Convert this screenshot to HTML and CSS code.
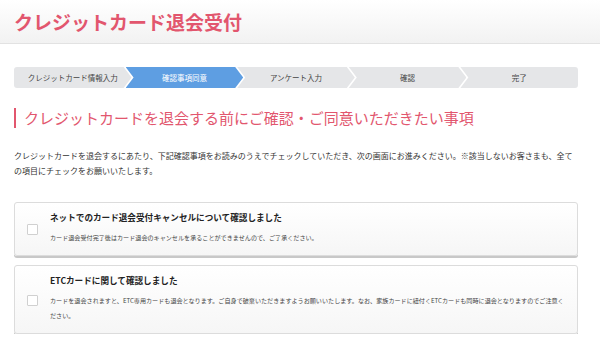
FILE: index.html
```html
<!DOCTYPE html>
<html lang="ja">
<head>
    <meta charset="UTF-8">
    <meta name="viewport" content="width=device-width, initial-scale=1.0">
    <title>クレジットカード退会受付</title>
    <link rel="stylesheet" href="styles.css">
</head>
<body>
    <header class="page-header">
        <h1>クレジットカード退会受付</h1>
    </header>

    <div class="content">
        <ol class="steps">
            <li class="step first">クレジットカード情報入力</li>
            <li class="step active">確認事項同意</li>
            <li class="step">アンケート入力</li>
            <li class="step">確認</li>
            <li class="step last">完了</li>
        </ol>

        <h2 class="section-title">クレジットカードを退会する前にご確認・ご同意いただきたい事項</h2>

        <p class="lead">クレジットカードを退会するにあたり、下記確認事項をお読みのうえでチェックしていただき、次の画面にお進みください。※該当しないお客さまも、全ての項目にチェックをお願いいたします。</p>

        <label class="check-card">
            <input type="checkbox" class="check-box">
            <span class="check-body">
                <span class="check-title">ネットでのカード退会受付キャンセルについて確認しました</span>
                <span class="check-text">カード退会受付完了後はカード退会のキャンセルを承ることができませんので、ご了承ください。</span>
            </span>
        </label>

        <label class="check-card">
            <input type="checkbox" class="check-box">
            <span class="check-body">
                <span class="check-title">ETCカードに関して確認しました</span>
                <span class="check-text">カードを退会されますと、ETC専用カードも退会となります。ご自身で破棄いただきますようお願いいたします。なお、家族カードに紐付くETCカードも同時に退会となりますのでご注意ください。</span>
            </span>
        </label>
    </div>
</body>
</html>
```

FILE: styles.css
```css
body {
    margin: 0;
    background-color: #fff;
    color: #333;
    font-family: "Noto Sans CJK JP", "Noto Sans", sans-serif;
}
.page-header {
    height: 43px;
    padding: 0 14px;
    display: flex;
    align-items: center;
    background: linear-gradient(#fff, #f2f2f2);
    border-bottom: 1px solid #e2e2e2;
}
.page-header h1 {
    margin: 0;
    font-size: 19px;
    font-weight: bold;
    color: #e2566e;
}
.content {
    width: 564px;
    margin-left: 14px;
}
.steps {
    display: flex;
    list-style: none;
    margin: 23px 0 0;
    padding: 0;
    height: 21px;
}
.steps .step {
    flex: 1;
    display: flex;
    align-items: center;
    justify-content: center;
    margin-left: -6px;
    background-color: #e5e6e8;
    font-size: 7.5px;
    color: #444;
    clip-path: polygon(0 0, calc(100% - 8px) 0, 100% 50%, calc(100% - 8px) 100%, 0 100%, 8px 50%);
}
.steps .step.first {
    margin-left: 0;
    border-radius: 3px 0 0 3px;
    clip-path: polygon(0 0, calc(100% - 8px) 0, 100% 50%, calc(100% - 8px) 100%, 0 100%);
}
.steps .step.last {
    border-radius: 0 3px 3px 0;
    clip-path: polygon(0 0, 100% 0, 100% 100%, 0 100%, 8px 50%);
}
.steps .step.active {
    background-color: #5e9ee2;
    color: #fff;
}
.section-title {
    margin: 20px 0 0;
    padding-left: 8px;
    border-left: 2px solid #e2566e;
    font-size: 15px;
    font-weight: normal;
    line-height: 20px;
    color: #e2566e;
}
.lead {
    margin: 20px 0 0;
    font-size: 8px;
    line-height: 15px;
    color: #333;
}
.check-card {
    display: flex;
    align-items: center;
    margin-top: 24px;
    padding: 7px 10px 10px 12px;
    background: linear-gradient(#fff, #f6f6f6);
    border: 1px solid #dcdcdc;
    border-radius: 3px;
    box-shadow: 0 2px 0 #c8c8c8;
    cursor: pointer;
}
.check-card + .check-card {
    margin-top: 9px;
}
.check-box {
    appearance: none;
    flex: none;
    width: 11px;
    height: 11px;
    margin: 4px 12px 0 0;
    border: 1px solid #d0d0d0;
    border-radius: 1px;
    background-color: #fff;
}
.check-body {
    display: flex;
    flex-direction: column;
}
.check-title {
    font-size: 8.6px;
    font-weight: bold;
    line-height: 14px;
    color: #222;
}
.check-text {
    margin-top: 6px;
    font-size: 6.1px;
    line-height: 15px;
    color: #444;
}
```
